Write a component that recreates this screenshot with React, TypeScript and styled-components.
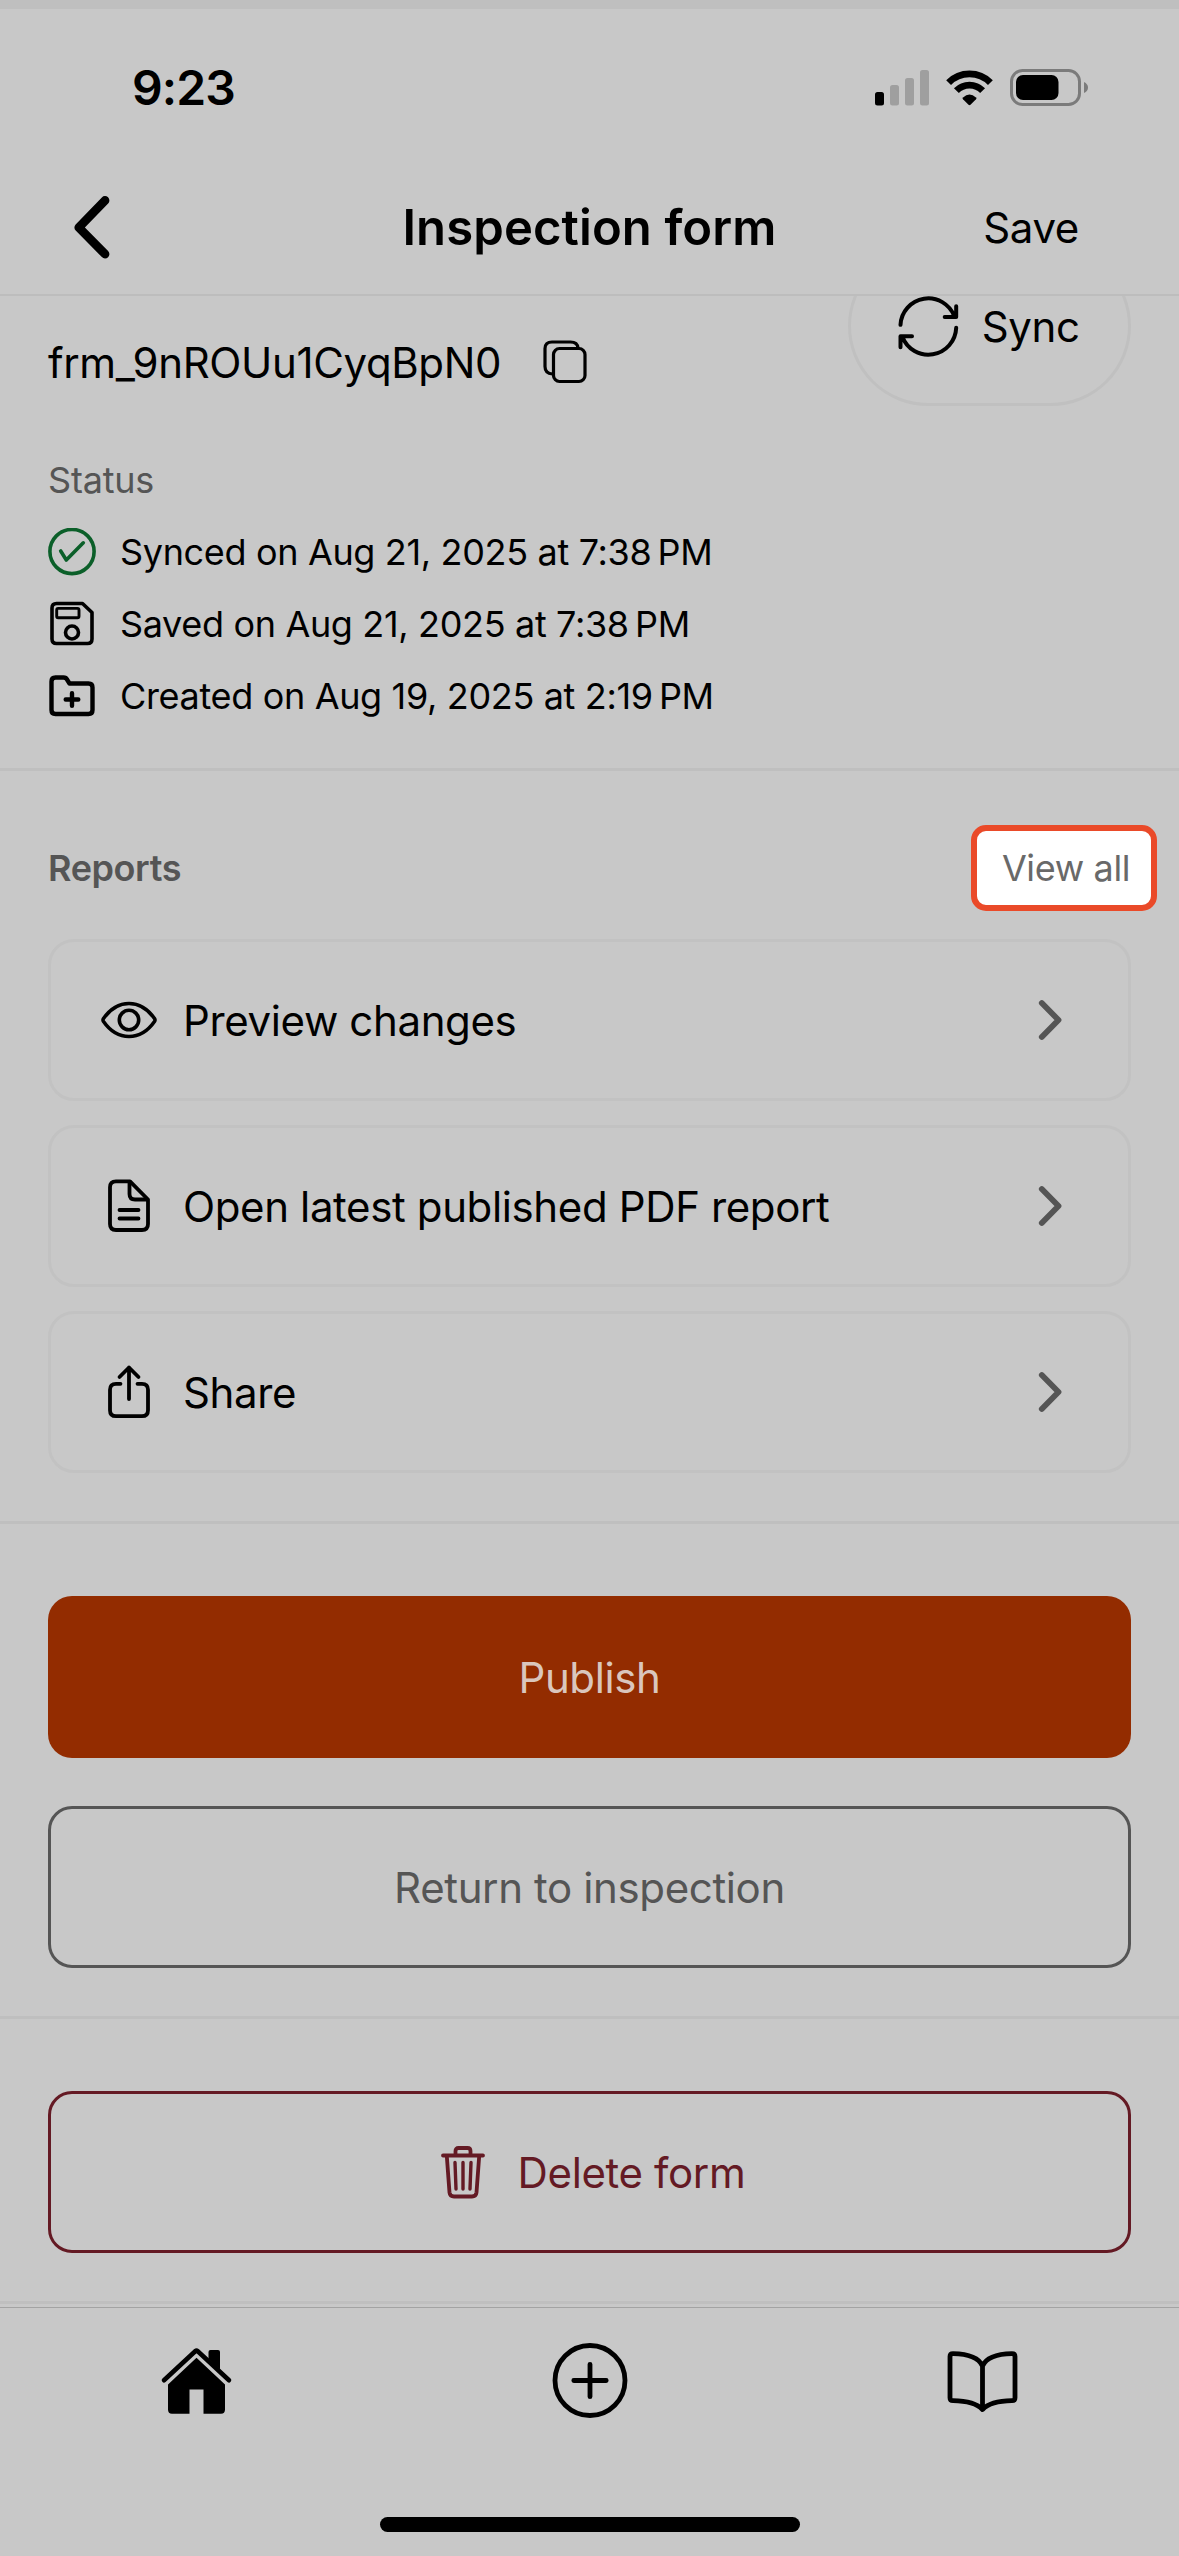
import React from "react";
import styled, { createGlobalStyle, css } from "styled-components";

const color = {
  surface: "#c8c8c8",
  line: "#bfbfbf",
  ink: "#000000",
  muted: "#555555",
  publish: "#932c00",
  danger: "#641a24",
  success: "#0b5f29",
  focus: "#ea4a29",
};

const GlobalStyle = createGlobalStyle`
  *, *::before, *::after { box-sizing: border-box; }
  body {
    margin: 0;
    background: ${color.surface};
    color: ${color.ink};
    font-family: Inter, "Liberation Sans", sans-serif;
    letter-spacing: -0.37px;
  }
  button { font: inherit; letter-spacing: inherit; color: inherit; background: none; border: 0; padding: 0; margin: 0; }
  svg { display: block; flex: none; }
`;

const Screen = styled.div`
  display: flex;
  flex-direction: column;
  width: 1179px;
  height: 2556px;
  overflow: hidden;
  background: ${color.surface};
`;

const Header = styled.header`
  flex: none;
  height: 296px;
  border-top: 9px solid ${color.line};
  border-bottom: 2px solid #bdbdbd;
`;

const StatusBar = styled.div`
  display: flex;
  align-items: center;
  justify-content: space-between;
  height: 151px;
  padding: 6px 91px 0 132px;
`;

const Clock = styled.time`
  font-size: 48px;
  font-weight: 600;
  line-height: 58px;
  letter-spacing: -0.9px;
`;

const Indicators = styled.div`
  display: flex;
  align-items: center;
  gap: 17px;
`;

const NavBar = styled.nav`
  display: grid;
  grid-template-columns: 1fr auto 1fr;
  align-items: center;
  height: 134px;
  padding: 0 100px 0 72px;
`;

const Title = styled.h1`
  margin: 0 0 0 28px;
  padding-top: 1px;
  font-size: 49px;
  font-weight: 600;
  line-height: 60px;
  letter-spacing: 0.1px;
`;

const SaveButton = styled.button`
  justify-self: end;
  padding-top: 2px;
  font-size: 42px;
  line-height: 50px;
`;

const Content = styled.main`
  flex: 1;
  min-height: 0;
  overflow: hidden;
`;

const Section = styled.section<{ $top: number; $bottom: number }>`
  padding: ${(p) => p.$top}px 48px ${(p) => p.$bottom}px;
  border-bottom: 3px solid ${color.line};
`;

const Summary = styled.div`
  display: flex;
  justify-content: space-between;
  align-items: flex-start;
`;

const Details = styled.div`
  padding-top: 39px;
`;

const FormId = styled.div`
  display: flex;
  align-items: center;
  gap: 42px;
  height: 54px;
  font-size: 42px;
`;

const StatusLabel = styled.div`
  margin-top: 70px;
  font-size: 36px;
  line-height: 42px;
  letter-spacing: -0.2px;
  color: ${color.muted};
`;

const StatusList = styled.ul`
  margin: 15px 0 0;
  padding: 0;
  list-style: none;
`;

const StatusItem = styled.li`
  display: flex;
  align-items: center;
  gap: 24px;
  height: 72px;
  font-size: 36px;
  letter-spacing: -0.34px;
  white-space: nowrap;
`;

const SyncButton = styled.button`
  display: flex;
  align-items: center;
  gap: 22px;
  width: 283px;
  height: 160px;
  margin-top: -50px;
  padding-left: 46px;
  border: 3px solid #c0c0c0;
  border-radius: 80px;
  font-size: 42px;
`;

const ReportsHeader = styled.div`
  display: flex;
  align-items: center;
  justify-content: space-between;
  margin-right: -26px;
`;

const ReportsTitle = styled.h2`
  margin: 0;
  font-size: 36px;
  font-weight: 600;
  line-height: 44px;
  letter-spacing: -0.4px;
  color: ${color.muted};
`;

const ViewAll = styled.button`
  width: 186px;
  height: 86px;
  padding-left: 4px;
  border: 6px solid ${color.focus};
  border-radius: 15px;
  background: #ffffff;
  color: #696969;
  font-size: 36px;
`;

const CardList = styled.div`
  display: flex;
  flex-direction: column;
  gap: 24px;
  margin-top: 28px;
`;

const Card = styled.button`
  display: flex;
  align-items: center;
  gap: 25px;
  height: 162px;
  padding: 0 66px 0 49px;
  border: 3px solid #c2c2c2;
  border-radius: 26px;
  font-size: 42px;
  text-align: left;
`;

const CardLabel = styled.span`
  flex: 1;
`;

const ActionGroup = styled.div`
  display: flex;
  flex-direction: column;
  gap: 48px;
`;

const variants = {
  solid: css`
    background: ${color.publish};
    color: #dac6bd;
  `,
  outline: css`
    border: 3px solid ${color.muted};
    color: ${color.muted};
  `,
  danger: css`
    padding-left: 6px;
    border: 3px solid ${color.danger};
    color: ${color.danger};
  `,
};

const Action = styled.button<{ $variant: keyof typeof variants }>`
  display: flex;
  align-items: center;
  justify-content: center;
  gap: 32px;
  height: 162px;
  border-radius: 24px;
  font-size: 42px;
  ${(p) => variants[p.$variant]}
`;

const BottomBar = styled.footer`
  flex: none;
  height: 249px;
  border-top: 1px solid #a3a3a3;
`;

const Tabs = styled.nav`
  display: grid;
  grid-template-columns: repeat(3, 1fr);
  height: 146px;
`;

const Tab = styled.button`
  display: flex;
  align-items: center;
  justify-content: center;
`;

const HomeIndicator = styled.div`
  width: 420px;
  height: 15px;
  margin: 63px auto 0;
  border-radius: 8px;
  background: ${color.ink};
`;

const Stroke = styled.svg<{ $weight: number }>`
  fill: none;
  stroke: currentColor;
  stroke-width: ${(p) => p.$weight};
  stroke-linecap: round;
  stroke-linejoin: round;
`;

const SuccessStroke = styled(Stroke)`
  color: ${color.success};
`;

const MutedStroke = styled(Stroke)`
  color: ${color.muted};
`;

const SignalIcon = () => (
  <svg width="54" height="36" viewBox="0 0 54 36">
    <rect x="0" y="22" width="9" height="13.5" rx="2.5" fill="#000" />
    <g fill="#9f9f9f">
      <rect x="15" y="15" width="9" height="20.5" rx="2.5" />
      <rect x="30" y="8" width="9" height="27.5" rx="2.5" />
      <rect x="45" y="0" width="9" height="35.5" rx="2.5" />
    </g>
  </svg>
);

const WifiIcon = () => (
  <svg width="47" height="36" viewBox="0 0 47 36">
    <g fill="none" stroke="#000" strokeWidth="6.8">
      <path d="M2.6 12.6A29.4 29.4 0 0 1 44.4 12.6" />
      <path d="M10.4 20.6A18.2 18.2 0 0 1 36.6 20.6" />
    </g>
    <path d="M17 27.4Q23.5 21.6 30 27.4Q31 28.3 30 29.3L24.5 34.7Q23.5 35.6 22.5 34.7L17 29.3Q16 28.3 17 27.4Z" />
  </svg>
);

const BatteryIcon = () => (
  <svg width="78" height="37" viewBox="0 0 78 37">
    <rect x="1.5" y="1.5" width="68" height="34" rx="11" fill="none" stroke="#7b7b7b" strokeWidth="3" />
    <rect x="6" y="6" width="42.5" height="25" rx="7" />
    <path d="M74 13Q78 15 78 18.5T74 24Z" fill="#7b7b7b" />
  </svg>
);

const BackIcon = () => (
  <Stroke $weight={8.8} width="38" height="64" viewBox="0 0 38 64">
    <path d="M33 5.5L6.8 32.5L33 59" />
  </Stroke>
);

const SyncIcon = () => (
  <Stroke $weight={12} width="62.7" height="62.7" viewBox="0 0 188 188">
    <path d="M10.5 89.5A83.5 83.5 0 0 1 172 64M177.500 33.500V66H143" />
    <path d="M177.500 98.500A83.5 83.5 0 0 1 16 125M10.500 157V123.500H45" />
  </Stroke>
);

const CopyIcon = () => (
  <Stroke $weight={3.2} width="44" height="44" viewBox="0 0 44 44">
    <rect x="10.5" y="8.500" width="31.500" height="33" rx="6" />
    <path d="M9.500 34Q2 33.500 2 26.500V8.500Q2 2 9 2H27.500Q34.500 2 35 8" />
  </Stroke>
);

const CheckIcon = () => (
  <SuccessStroke $weight={3.6} width="48" height="48" viewBox="0 0 48 48">
    <circle cx="24" cy="23.500" r="22.100" />
    <path d="M12.700 23L18.300 32L35.300 14.800" />
  </SuccessStroke>
);

const DiskIcon = () => (
  <Stroke $weight={3.6} width="48" height="48" viewBox="0 0 48 48">
    <path d="M9 3.500H34.500L44 12.500V39Q44 43.500 39.500 43.500H8.500Q4 43.500 4 39V8Q4 3.500 8.500 3.500Z" />
    <rect x="8.700" y="8.400" width="22.300" height="9.400" rx="1.500" strokeWidth="2.900" />
    <circle cx="24" cy="32.500" r="6.500" />
  </Stroke>
);

const FolderIcon = () => (
  <Stroke $weight={4.4} width="48" height="48" viewBox="0 0 48 48">
    <path d="M7.500 5.500H15.500Q18 5.500 19 7.500L21.500 11.500H40.500Q44.500 11.500 44.500 15.500V38Q44.500 42 40.500 42H7.500Q3.500 42 3.500 38V9.500Q3.500 5.500 7.500 5.500Z" />
    <path d="M24 21.200V33.800M17.700 27.500H30.300" />
  </Stroke>
);

const EyeIcon = () => (
  <Stroke $weight={3.6} width="58" height="58" viewBox="0 0 58 58">
    <path d="M3.500 27.500C10.500 17.500 19 12.500 29 12.500S47.500 17.500 54.500 27.500Q55.500 29 54.500 30.500C47.500 40.500 39 45.500 29 45.500S10.500 40.500 3.500 30.500Q2.500 29 3.500 27.500Z" />
    <circle cx="29" cy="29" r="9.700" />
  </Stroke>
);

const DocumentIcon = () => (
  <Stroke $weight={3.8} width="58" height="58" viewBox="0 0 58 58">
    <path d="M30 4.300H16Q10 4.300 10 10.300V47Q10 53 16 53H42Q48 53 48 47V22.500Z" />
    <path d="M29.500 5V17Q29.500 22.500 35 22.500H47M19.500 33H38.500M19.500 41.500H38.500" />
  </Stroke>
);

const ShareIcon = () => (
  <Stroke $weight={3.8} width="58" height="58" viewBox="0 0 58 58">
    <path d="M20.500 20.800H16Q10 20.800 10 26.800V47.200Q10 53.200 16 53.200H42Q48 53.200 48 47.200V26.800Q48 20.800 42 20.800H37.500" />
    <path d="M29 36V4.500M19.500 14L29 4.500L38.500 14" />
  </Stroke>
);

const ChevronIcon = () => (
  <MutedStroke $weight={5.8} width="24" height="42" viewBox="0 0 24 42">
    <path d="M3.800 4L20.500 21L3.800 38" />
  </MutedStroke>
);

const TrashIcon = () => (
  <Stroke $weight={3.8} width="46" height="54" viewBox="0 0 46 54">
    <path d="M3 10.500H43M15.500 10V6Q15.500 3 18.500 3H27.500Q30.500 3 30.500 6V10" />
    <path d="M6.800 11L9.500 47.500Q9.900 51.500 14 51.500H32Q36.100 51.500 36.500 47.500L39.200 11" />
    <path d="M15 17.500L16 44M23 17.500V44M31 17.500L30 44" strokeWidth="3.400" />
  </Stroke>
);

const HomeIcon = () => (
  <svg width="73" height="70" viewBox="0 0 73 70">
    <path d="M4 34.300L35.500 5Q36.500 4.100 37.500 5L69 34.300" fill="none" stroke="#000" strokeWidth="4.600" strokeLinecap="round" />
    <path d="M48.500 13V6Q48.500 4 50.500 4H58Q60 4 60 6V23.500Z" />
    <path d="M36.500 11.800L65 38.400V63.500Q65 67.700 61 67.700H43.500V43.600H29.500V67.700H12Q8 67.700 8 63.500V38.400Z" />
  </svg>
);

const AddIcon = () => (
  <Stroke $weight={4.8} width="76" height="76" viewBox="0 0 76 76">
    <circle cx="38" cy="37.500" r="35" />
    <path d="M38 21.300V53.700M21.800 37.500H54.200" />
  </Stroke>
);

const BookIcon = () => (
  <Stroke $weight={4.8} width="75" height="65" viewBox="0 0 75 65">
    <path d="M37.500 17C33.500 8 21 4.800 8 4.600Q5 4.600 5 7.600V48.700Q5 51.700 8 51.700C20 51.900 31 53.500 37.500 60.500C44 53.500 55 51.900 67 51.700Q70 51.700 70 48.700V7.600Q70 4.600 67 4.600C54 4.800 41.500 8 37.500 17ZV60" />
  </Stroke>
);

const reports = [
  { label: "Preview changes", Icon: EyeIcon },
  { label: "Open latest published PDF report", Icon: DocumentIcon },
  { label: "Share", Icon: ShareIcon },
];

const history = [
  { label: "Synced on Aug 21, 2025 at 7:38\u202fPM", Icon: CheckIcon },
  { label: "Saved on Aug 21, 2025 at 7:38\u202fPM", Icon: DiskIcon },
  { label: "Created on Aug 19, 2025 at 2:19\u202fPM", Icon: FolderIcon },
];

export default function App() {
  return (
    <>
      <GlobalStyle />
      <Screen>
        <Header>
          <StatusBar>
            <Clock>9:23</Clock>
            <Indicators>
              <SignalIcon />
              <WifiIcon />
              <BatteryIcon />
            </Indicators>
          </StatusBar>
          <NavBar>
            <BackIcon />
            <Title>Inspection form</Title>
            <SaveButton>Save</SaveButton>
          </NavBar>
        </Header>

        <Content>
          <Section $top={0} $bottom={36}>
            <Summary>
              <Details>
                <FormId>
                  <span>frm_9nROUu1CyqBpN0</span>
                  <CopyIcon />
                </FormId>
                <StatusLabel>Status</StatusLabel>
                <StatusList>
                  {history.map(({ label, Icon }) => (
                    <StatusItem key={label}>
                      <Icon />
                      <span>{label}</span>
                    </StatusItem>
                  ))}
                </StatusList>
              </Details>
              <SyncButton>
                <SyncIcon />
                <span>Sync</span>
              </SyncButton>
            </Summary>
          </Section>

          <Section $top={54} $bottom={48}>
            <ReportsHeader>
              <ReportsTitle>Reports</ReportsTitle>
              <ViewAll>View all</ViewAll>
            </ReportsHeader>
            <CardList>
              {reports.map(({ label, Icon }) => (
                <Card key={label}>
                  <Icon />
                  <CardLabel>{label}</CardLabel>
                  <ChevronIcon />
                </Card>
              ))}
            </CardList>
          </Section>

          <Section $top={72} $bottom={48}>
            <ActionGroup>
              <Action $variant="solid">Publish</Action>
              <Action $variant="outline">Return to inspection</Action>
            </ActionGroup>
          </Section>

          <Section $top={72} $bottom={48}>
            <ActionGroup>
              <Action $variant="danger">
                <TrashIcon />
                <span>Delete form</span>
              </Action>
            </ActionGroup>
          </Section>
        </Content>

        <BottomBar>
          <Tabs>
            <Tab aria-label="Home"><HomeIcon /></Tab>
            <Tab aria-label="Add"><AddIcon /></Tab>
            <Tab aria-label="Library"><BookIcon /></Tab>
          </Tabs>
          <HomeIndicator />
        </BottomBar>
      </Screen>
    </>
  );
}
